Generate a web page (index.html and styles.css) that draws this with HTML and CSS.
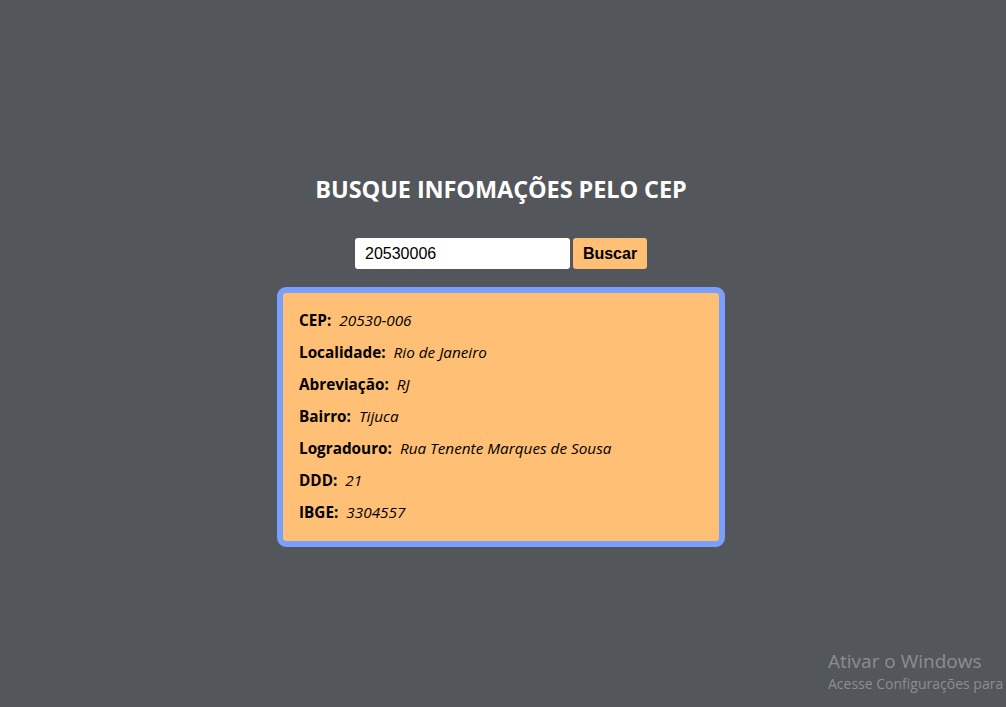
FILE: index.html
```html
<!DOCTYPE html>
<html lang="pt-BR">
<head>
<meta charset="utf-8">
<title>Busca CEP</title>
<link rel="stylesheet" href="styles.css">
</head>
<body>
<main class="app">
  <h1 class="title">BUSQUE INFOMAÇÕES PELO CEP</h1>
  <form class="search">
    <input class="search-input" type="text" value="20530006">
    <button class="search-btn" type="button">Buscar</button>
  </form>
  <section class="card">
    <p class="row"><span class="label">CEP:</span><span class="value">20530-006</span></p>
    <p class="row"><span class="label">Localidade:</span><span class="value">Rio de Janeiro</span></p>
    <p class="row"><span class="label">Abreviação:</span><span class="value">RJ</span></p>
    <p class="row"><span class="label">Bairro:</span><span class="value">Tijuca</span></p>
    <p class="row"><span class="label">Logradouro:</span><span class="value">Rua Tenente Marques de Sousa</span></p>
    <p class="row"><span class="label">DDD:</span><span class="value">21</span></p>
    <p class="row"><span class="label">IBGE:</span><span class="value">3304557</span></p>
  </section>
</main>
<div class="watermark">
  <div class="wm-title">Ativar o Windows</div>
  <div class="wm-sub">Acesse Configurações para</div>
</div>
</body>
</html>
```
FILE: styles.css
```css
html, body {
  margin: 0;
  padding: 0;
  height: 100%;
}
body {
  background: #53565a;
  font-family: "Open Sans", "Noto Sans", sans-serif;
  overflow: hidden;
  position: relative;
}
.app {
  display: flex;
  flex-direction: column;
  align-items: center;
  padding-top: 172px;
  padding-right: 4px;
}
.title {
  margin: 0;
  color: #ffffff;
  font-size: 23.5px;
  font-weight: 700;
  line-height: 34px;
  letter-spacing: -0.1px;
}
.search {
  display: flex;
  gap: 3px;
  margin-top: 32px;
}
.search-input {
  width: 215px;
  height: 31px;
  box-sizing: border-box;
  border: none;
  border-radius: 3px;
  padding: 0 10px;
  font-family: "Liberation Sans", Arial, sans-serif;
  font-size: 16px;
  color: #000;
  outline: none;
}
.search-btn {
  width: 74px;
  height: 31px;
  border: none;
  border-radius: 3px;
  background: #ffbf75;
  font-family: "Liberation Sans", Arial, sans-serif;
  font-weight: 700;
  font-size: 16px;
  color: #000;
  padding: 0;
}
.card {
  margin-top: 18px;
  width: 448px;
  box-sizing: border-box;
  background: #ffbf75;
  border: 6px solid #7a9ffc;
  border-radius: 9px;
  padding: 15px 16px 9px;
}
.row {
  margin: 0;
  height: 32px;
  font-size: 15.3px;
  line-height: 24px;
  color: #000;
}
.label {
  font-weight: 700;
  margin-right: 8px;
}
.value {
  font-style: italic;
}
.watermark {
  position: absolute;
  left: 828px;
  top: 649px;
  color: #8b8e92;
  white-space: nowrap;
}
.wm-title {
  font-size: 19px;
  line-height: 25px;
}
.wm-sub {
  font-size: 14px;
  line-height: 20px;
}
```
